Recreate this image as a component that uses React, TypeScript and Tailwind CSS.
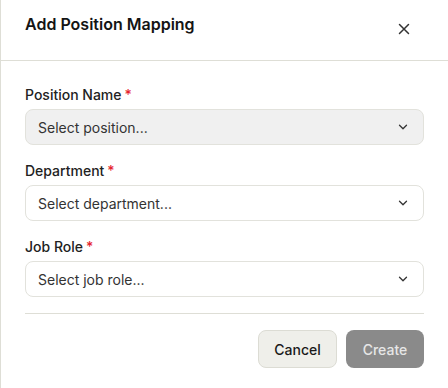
import React from "react";

function Chevron() {
  return (
    <svg width="14" height="14" viewBox="0 0 24 24" fill="none" stroke="#333" strokeWidth="2.2" strokeLinecap="round" strokeLinejoin="round">
      <path d="m6 9 6 6 6-6" />
    </svg>
  );
}

function Field({ label, placeholder, active }: { label: string; placeholder: string; active?: boolean }) {
  return (
    <div className="flex flex-col gap-1">
      <div className="text-[14px] leading-5 font-medium text-[#222]">
        {label}
        <span className="ml-[3px] text-[#e5252f]">*</span>
      </div>
      <div
        className={
          "flex h-9 items-center justify-between rounded-lg border border-[#e2e2dc] pl-[12px] pr-[13px] " +
          (active ? "bg-[#f0f0f0]" : "bg-white")
        }
      >
        <span className="text-[14px] text-[#333]">{placeholder}</span>
        <Chevron />
      </div>
    </div>
  );
}

export default function App() {
  return (
    <div className="h-[388px] w-[448px] overflow-hidden bg-white font-['Inter',sans-serif] border-l border-[#deded6]">
      <div className="flex h-[61px] items-start justify-between border-b border-[#deded6] pl-6 pr-[35px] pt-[12px]">
        <h2 className="text-[16px] leading-6 font-semibold text-[#141414]">Add Position Mapping</h2>
        <svg className="mt-[8px]" width="18" height="18" viewBox="0 0 24 24" fill="none" stroke="#333" strokeWidth="2" strokeLinecap="round">
          <path d="M18 6 6 18M6 6l12 12" />
        </svg>
      </div>
      <div className="pl-6 pr-[24px] pt-6">
        <div className="flex flex-col gap-4">
          <Field label="Position Name" placeholder="Select position..." active />
          <Field label="Department" placeholder="Select department..." />
          <Field label="Job Role" placeholder="Select job role..." />
        </div>
        <div className="mt-4 border-t border-[#deded6]" />
        <div className="mt-4 flex justify-end gap-[9px]">
          <button className="h-[38px] w-[79px] rounded-lg border border-[#dcdcd4] bg-[#efefea] text-[14px] font-medium text-[#1a1a1a]">
            Cancel
          </button>
          <button className="h-[38px] w-[78px] rounded-lg bg-[#8a8a8a] text-[14px] font-medium text-[#e6e6e6]">
            Create
          </button>
        </div>
      </div>
    </div>
  );
}
